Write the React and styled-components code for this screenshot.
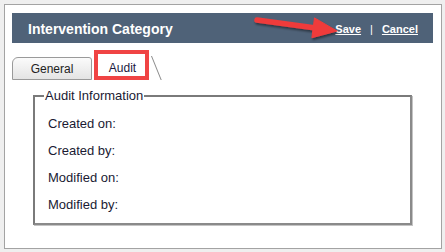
import React from "react";
import styled, { createGlobalStyle } from "styled-components";

const GlobalStyle = createGlobalStyle`
  html, body {
    margin: 0;
    padding: 0;
    background: #efefef;
    font-family: "Liberation Sans", Arial, sans-serif;
  }
`;

export default function App() {
  const fields = ["Created on:", "Created by:", "Modified on:", "Modified by:"];
  return (
    <>
      <GlobalStyle />
      <Page>
        <Frame>
          <Header>
            <Title>Intervention Category</Title>
            <Arrow width="90" height="30" viewBox="0 0 90 30">
              <defs>
                <filter id="sh" x="-20%" y="-40%" width="140%" height="180%">
                  <feDropShadow dx="1" dy="2" stdDeviation="1.2" floodColor="#000" floodOpacity="0.45" />
                </filter>
              </defs>
              <g filter="url(#sh)" fill="#ef3b3b" stroke="#ef3b3b">
                <line x1="5" y1="7" x2="62" y2="14.8" strokeWidth="5.5" strokeLinecap="round" />
                <polygon points="85,18 62.5,4.9 59.9,24.7" strokeWidth="1" strokeLinejoin="round" />
              </g>
            </Arrow>
            <Actions>
              <ActionLink>Save</ActionLink>
              <Divider>|</Divider>
              <ActionLink>Cancel</ActionLink>
            </Actions>
          </Header>
          <TabRow>
            <Tab>General</Tab>
            <ActiveTab>Audit</ActiveTab>
          </TabRow>
          <Group>
            <Legend>Audit Information</Legend>
            {fields.map((f) => (
              <Field key={f}>{f}</Field>
            ))}
          </Group>
        </Frame>
      </Page>
    </>
  );
}

const Page = styled.div`
  padding: 4px;
`;

const Frame = styled.div`
  position: relative;
  box-sizing: border-box;
  width: 438px;
  height: 245px;
  background: #fff;
  border: 1px solid #a3a3a3;
  padding: 8px 8px 0 7px;
`;

const Header = styled.div`
  position: relative;
  display: flex;
  align-items: center;
  justify-content: space-between;
  height: 30px;
  background: #4f6278;
  padding: 0 15px 0 16px;
`;

const Title = styled.div`
  color: #fff;
  font-weight: bold;
  font-size: 14px;
  margin-top: 1px;
`;

const Arrow = styled.svg`
  position: absolute;
  left: 240px;
  top: 0;
  overflow: visible;
`;

const Actions = styled.div`
  display: flex;
  align-items: center;
  gap: 8px;
  color: #fff;
  font-size: 11px;
  font-weight: bold;
  margin-top: 2px;
`;

const ActionLink = styled.span`
  text-decoration: underline;
  cursor: pointer;
`;

const Divider = styled.span`
  font-weight: normal;
  padding: 0 1px;
`;

const TabRow = styled.div`
  display: flex;
  align-items: flex-end;
  height: 37px;
`;

const Tab = styled.div`
  box-sizing: border-box;
  width: 80px;
  height: 23px;
  display: flex;
  align-items: center;
  justify-content: center;
  font-size: 12px;
  color: #222;
  border: 1px solid #9a9a9a;
  border-radius: 6px 3px 0 0;
  background: linear-gradient(#fbfbfb, #e4e4e4);
`;

const ActiveTab = styled.div`
  position: relative;
  box-sizing: border-box;
  width: 55px;
  height: 30px;
  margin-left: 2px;
  display: flex;
  align-items: center;
  justify-content: center;
  padding: 6px 0 0 2px;
  font-size: 12px;
  color: #1a1a40;
  background: #fff;
  border: 4px solid #f04444;

  &::after {
    content: "";
    position: absolute;
    left: 53px;
    bottom: -4px;
    width: 1px;
    height: 24px;
    background: #8a8a8a;
    transform-origin: top left;
    transform: skewX(22deg);
  }
`;

const Group = styled.fieldset`
  box-sizing: border-box;
  width: 379px;
  height: 137px;
  margin: 8px 0 0 21px;
  padding: 12px 13px 0;
  border: 2px solid;
  border-color: #7a7a7a #8a8a8a #8a8a8a #7a7a7a;
  box-shadow: 1px 1px 0 #c4c4c4;
`;

const Legend = styled.legend`
  font-size: 13px;
  color: #1a1a33;
  padding: 0 1px;
  margin-left: -4px;
`;

const Field = styled.div`
  font-size: 13px;
  color: #1a1a33;
  height: 27px;
  line-height: 18px;
`;
